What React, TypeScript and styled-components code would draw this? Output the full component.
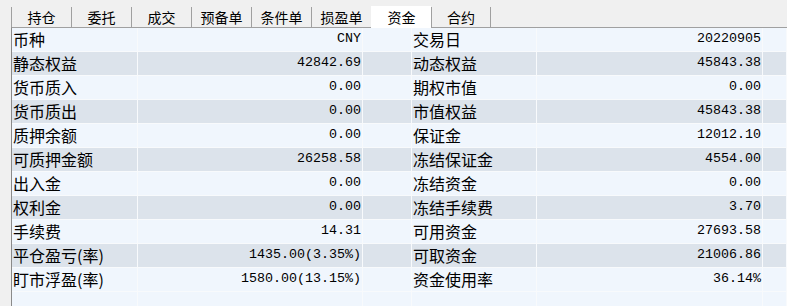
import React from "react";
import styled, { createGlobalStyle } from "styled-components";

// global
const GlobalStyle = createGlobalStyle`
  html, body {
    margin: 0;
    padding: 0;
    background-color: #f0f0f0;
    overflow: hidden;
  }
`;

const Page = styled.div`
  width: 787px;
  height: 306px;
  padding-left: 11px;
  box-sizing: border-box;
  background-color: #f0f0f0;
  overflow: hidden;
`;

// 탭
const TabBar = styled.div`
  display: flex;
  align-items: flex-end;
  height: 27px;
  box-sizing: border-box;
`;

const Tab = styled.div<{ $active?: boolean; $last?: boolean }>`
  width: 60px;
  height: ${(p) => (p.$active ? "22px" : "20px")};
  box-sizing: border-box;
  display: flex;
  align-items: center;
  justify-content: center;
  border-left: 1px solid ${(p) => (p.$active ? "#ffffff" : "#a0a0a0")};
  border-right: ${(p) => (p.$last ? "1px solid #a0a0a0" : "none")};
  background-color: ${(p) => (p.$active ? "#ffffff" : "#f0f0f0")};
  margin-bottom: ${(p) => (p.$active ? "-1px" : "0")};
  position: relative;
  z-index: ${(p) => (p.$active ? 1 : 0)};
  font-family: "Noto Sans CJK SC", sans-serif;
  font-size: 14px;
  color: #000;
`;

// 표
const Panel = styled.div`
  border-top: 1px solid #a0a0a0;
  border-left: 1px solid #8a8a8a;
  background-color: #f0f6fd;
  height: 100%;
`;

const Row = styled.div<{ $shade?: boolean }>`
  display: grid;
  grid-template-columns: 126px 225px 49px 125px 226px 1fr;
  height: 24px;
  box-sizing: border-box;
  border-bottom: 1px solid #f8fafc;
  background-color: ${(p) => (p.$shade ? "#dce3eb" : "#f0f6fd")};
`;

const Cell = styled.div<{ $num?: boolean }>`
  box-sizing: border-box;
  border-right: 1px solid #f8fafc;
  line-height: 22px;
  white-space: nowrap;
  overflow: hidden;
  color: #000;
  text-align: ${(p) => (p.$num ? "right" : "left")};
  padding: ${(p) => (p.$num ? "0 1px 0 0" : "0 0 0 1px")};
  font-family: ${(p) =>
    p.$num
      ? '"Liberation Mono", "DejaVu Sans Mono", monospace'
      : '"Noto Sans CJK SC", sans-serif'};
  font-size: ${(p) => (p.$num ? "13.33px" : "16px")};
`;

const tabs = ["持仓", "委托", "成交", "预备单", "条件单", "损盈单", "资金", "合约"];

const rows: [string, string, string, string][] = [
  ["币种", "CNY", "交易日", "20220905"],
  ["静态权益", "42842.69", "动态权益", "45843.38"],
  ["货币质入", "0.00", "期权市值", "0.00"],
  ["货币质出", "0.00", "市值权益", "45843.38"],
  ["质押余额", "0.00", "保证金", "12012.10"],
  ["可质押金额", "26258.58", "冻结保证金", "4554.00"],
  ["出入金", "0.00", "冻结资金", "0.00"],
  ["权利金", "0.00", "冻结手续费", "3.70"],
  ["手续费", "14.31", "可用资金", "27693.58"],
  ["平仓盈亏(率)", "1435.00(3.35%)", "可取资金", "21006.86"],
  ["盯市浮盈(率)", "1580.00(13.15%)", "资金使用率", "36.14%"],
  ["", "", "", ""],
];

const App: React.FC = () => {
  return (
    <Page>
      <GlobalStyle />
      <TabBar>
        {tabs.map((t, i) => (
          <Tab key={t} $active={t === "资金"} $last={i === tabs.length - 1}>
            {t}
          </Tab>
        ))}
      </TabBar>
      <Panel>
        {rows.map((r, i) => (
          <Row key={i} $shade={i % 2 === 1 && i < 11}>
            <Cell>{r[0]}</Cell>
            <Cell $num>{r[1]}</Cell>
            <Cell />
            <Cell>{r[2]}</Cell>
            <Cell $num>{r[3]}</Cell>
            <Cell />
          </Row>
        ))}
      </Panel>
    </Page>
  );
};

export default App;
